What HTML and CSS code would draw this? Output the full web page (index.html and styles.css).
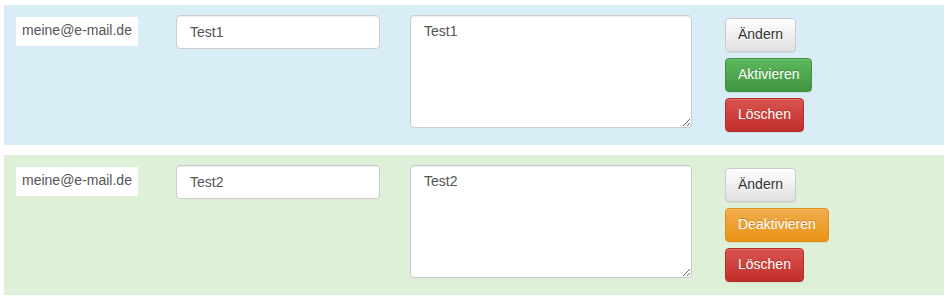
FILE: index.html
```html
<!DOCTYPE html>
<html lang="de">
<head>
    <meta charset="UTF-8">
    <meta name="viewport" content="width=device-width, initial-scale=1.0">
    <title>Einträge verwalten</title>
    <link rel="stylesheet" href="styles.css">
</head>
<body>
    <div class="entry-list">
        <div class="entry entry-info">
            <div class="entry-email">meine@e-mail.de</div>
            <div class="entry-col">
                <input type="text" class="form-control" value="Test1">
            </div>
            <div class="entry-col">
                <textarea class="form-control form-textarea">Test1</textarea>
            </div>
            <div class="entry-actions">
                <button class="btn btn-default">Ändern</button>
                <button class="btn btn-success">Aktivieren</button>
                <button class="btn btn-danger">Löschen</button>
            </div>
        </div>

        <div class="entry entry-success">
            <div class="entry-email">meine@e-mail.de</div>
            <div class="entry-col">
                <input type="text" class="form-control" value="Test2">
            </div>
            <div class="entry-col">
                <textarea class="form-control form-textarea">Test2</textarea>
            </div>
            <div class="entry-actions">
                <button class="btn btn-default">Ändern</button>
                <button class="btn btn-warning">Deaktivieren</button>
                <button class="btn btn-danger">Löschen</button>
            </div>
        </div>
    </div>
</body>
</html>
```

FILE: styles.css
```css
* {
    margin: 0;
    padding: 0;
    box-sizing: border-box;
}

body {
    font-family: "Liberation Sans", Arial, sans-serif;
    font-size: 14px;
    line-height: 1.42857;
    color: #333;
    background: #fff;
    padding: 5px 5px 0 4px;
}

.entry-list {
    display: flex;
    flex-direction: column;
    gap: 10px;
    width: 940px;
}

.entry {
    display: grid;
    grid-template-columns: 160px 234px 315px auto;
    align-items: start;
    padding: 10px 0 13px 12px;
}

.entry-info {
    background: #d9edf7;
}

.entry-success {
    background: #dff0d8;
}

.entry-email {
    background: #fff;
    color: #555;
    width: 122px;
    height: 29px;
    margin-top: 2px;
    padding: 4px 6px;
    white-space: nowrap;
}

.form-control {
    display: block;
    width: 204px;
    height: 34px;
    padding: 6px 13px;
    font-family: inherit;
    font-size: 14px;
    line-height: 1.42857;
    color: #555;
    background: #fff;
    border: 1px solid #ccc;
    border-radius: 4px;
    box-shadow: inset 0 1px 1px rgba(0,0,0,0.075);
}

.form-textarea {
    width: 282px;
    height: 113px;
    resize: vertical;
}

.entry-actions {
    display: flex;
    flex-direction: column;
    align-items: flex-start;
    gap: 6px;
    margin-top: 3px;
}

.btn {
    display: inline-block;
    height: 34px;
    padding: 6px 12px;
    font-family: inherit;
    font-size: 14px;
    line-height: 1.42857;
    border: 1px solid transparent;
    border-radius: 4px;
    cursor: pointer;
    white-space: nowrap;
    text-shadow: 0 -1px 0 rgba(0,0,0,0.2);
    box-shadow: inset 0 1px 0 rgba(255,255,255,0.15), 0 1px 1px rgba(0,0,0,0.075);
}

.btn-default {
    color: #333;
    background: linear-gradient(to bottom, #fff 0%, #e0e0e0 100%);
    border-color: #ccc;
    text-shadow: 0 1px 0 #fff;
}

.btn-success {
    color: #fff;
    background: linear-gradient(to bottom, #5cb85c 0%, #419641 100%);
    border-color: #3e8f3e;
}

.btn-warning {
    color: #fff;
    background: linear-gradient(to bottom, #f0ad4e 0%, #eb9316 100%);
    border-color: #e38d13;
}

.btn-danger {
    color: #fff;
    background: linear-gradient(to bottom, #d9534f 0%, #c12e2a 100%);
    border-color: #b92c28;
}
```
